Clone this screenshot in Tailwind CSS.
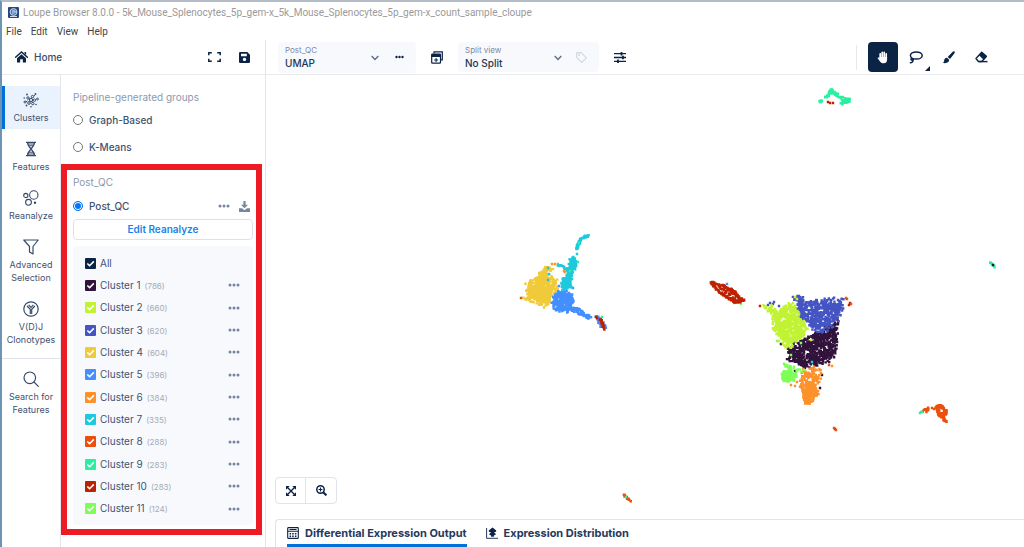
<!DOCTYPE html>
<html lang="en">
<head>
    <meta charset="UTF-8">
    <meta name="viewport" content="width=device-width, initial-scale=1.0">
    <title>Loupe Browser 8.0.0</title>
    <script src="https://cdn.jsdelivr.net/npm/@tailwindcss/browser@4"></script>
</head>
<body class="h-screen flex flex-col overflow-hidden bg-white border-l-2 border-l-[#6d93b5] border-t-2 border-t-[#b3bcc6] font-['Inter',sans-serif] text-[#3f5271] text-[10px]">

    <!-- Window title and menu -->
    <header class="shrink-0 font-['Roboto',sans-serif]">
        <div class="h-[21px] flex items-center gap-1 pl-[6px] text-[10px] text-[#9a9a9a] whitespace-nowrap">
            <svg class="size-[11px]" viewBox="0 0 11 11"><rect width="11" height="11" rx="1" fill="#26477e"/><circle cx="5.5" cy="5" r="3.4" fill="#4b77b5" stroke="#c8d8ee" stroke-width="1"/><path d="M4 4h3M4 6h2M6 5h2M2 9.5h7" stroke="#e4edf8" stroke-width=".9"/></svg>
            <h1>Loupe Browser 8.0.0 - 5k_Mouse_Splenocytes_5p_gem-x_5k_Mouse_Splenocytes_5p_gem-x_count_sample_cloupe</h1>
        </div>
        <nav class="h-[17px] flex items-center gap-[9px] pl-1 text-[10px] text-[#444]">
            <button>File</button>
            <button>Edit</button>
            <button>View</button>
            <button>Help</button>
        </nav>
    </header>

    <div class="flex-1 min-h-0 flex">
        <!-- Left side -->
        <aside class="w-[264px] shrink-0 flex flex-col border-r border-[#e3e6ec]">
            <div class="h-[35px] shrink-0 flex items-center pl-[13px] pr-[15px] border-b border-[#e8eaee] text-[#0b2345]">
                <a href="#" class="flex items-center gap-[6px] font-medium text-[#3a4d6d]">
                    <svg class="w-[13px] h-[12px]" viewBox="0 0 13 12"><path d="M.6 6.2 6.5 1l5.9 5.2" fill="none" stroke="#0b2345" stroke-width="1.5" stroke-linecap="round"/><path d="M9.500 1h1.600v3l-1.600-1.400zM6.500 3.300 11 7.200V11.500H7.800V8.200H5.200v3.300H2V7.200z" fill="#0b2345"/></svg>
                    Home
                </a>
                <button class="ml-auto mr-[18px]" aria-label="Full screen">
                    <svg class="w-[13px] h-[10px]" viewBox="0 0 13 10" fill="none" stroke="#0b2345" stroke-width="1.500"><path d="M.8 3.200V.8h3M9.200.8h3v2.400M12.200 6.800v2.400h-3M3.800 9.200h-3V6.800"/></svg>
                </button>
                <button aria-label="Save">
                    <svg class="size-[11px]" viewBox="0 0 11 11"><path fill="#0b2345" fill-rule="evenodd" d="M1.200 0H8.300L11 2.700V9.800Q11 11 9.800 11H1.200Q0 11 0 9.800V1.200Q0 0 1.200 0zM2 1.700V4.200H7.800V1.700zM5.500 5.700a1.700 1.700 0 1 0 .01 0z"/></svg>
                </button>
            </div>

            <div class="flex-1 min-h-0 flex">
                <nav class="w-[59px] shrink-0 border-r border-[#e3e6ec] pt-[11px] text-[9px] leading-[13px] text-center">
                    <ul class="flex flex-col gap-[6px]">
                        <li>
                            <a href="#" class="flex flex-col items-center gap-[3px] pt-[6px] pb-[5px] pr-[3px] bg-[#e9f2fd] border-l-3 border-[#0071d9]">
                                <svg class="size-4" viewBox="0 0 16 16" fill="none" stroke="#354a6b" stroke-width="1"><circle cx="8" cy="8" r="1.600"/><circle cx="5" cy="6" r="1.200"/><circle cx="9.500" cy="4.600" r="1.200"/><circle cx="11.500" cy="8.200" r="1.200"/><circle cx="6" cy="11" r="1.300"/><circle cx="9.800" cy="11.600" r="1.200"/><circle cx="2" cy="10" r="1"/><circle cx="14.500" cy="7" r=".9"/><path d="M6 6.600l.8.500M8.500 6.400l.5-.800M9.700 8h.7M7.200 9.500l-.6.500M9 9.300l.4 1.200M3 9.800l1.500-1M10.600 4 12 3"/><g fill="#354a6b" stroke="none"><circle cx="4" cy="2.500" r=".9"/><circle cx="12.500" cy="2" r=".9"/><circle cx="13" cy="12.500" r=".8"/><circle cx="3.500" cy="13.500" r=".9"/><circle cx="8" cy="14.800" r=".8"/><circle cx="1.200" cy="6" r=".8"/></g></svg>
                                Clusters
                            </a>
                        </li>
                        <li>
                            <a href="#" class="flex flex-col items-center gap-[3px] pt-[6px] pb-[5px]">
                                <svg class="size-4" viewBox="0 0 16 16" fill="none" stroke="#354a6b" stroke-width="1"><path d="M3 1.300h10M3 14.700h10M4.500 1.500C4.500 5 7 6.500 8 8c1 1.500 3.500 3 3.500 6.500M11.500 1.500C11.500 5 9 6.500 8 8c-1 1.500-3.500 3-3.500 6.500" stroke-width="1.300"/><path d="M5 3h6M5.500 4.800h5M5.500 11.200h5M5 13h6"/></svg>
                                Features
                            </a>
                        </li>
                        <li>
                            <a href="#" class="flex flex-col items-center gap-[3px] pt-[6px] pb-[5px]">
                                <svg class="size-4" viewBox="0 0 16 16" fill="none" stroke="#354a6b" stroke-width="1.100"><circle cx="10.800" cy="5" r="4.200"/><circle cx="2.800" cy="5.500" r="2.100"/><circle cx="5.500" cy="12.300" r="2.900"/><circle cx="12" cy="12.800" r="1.200" fill="#354a6b" stroke="none"/></svg>
                                Reanalyze
                            </a>
                        </li>
                        <li>
                            <a href="#" class="flex flex-col items-center gap-[3px] pt-[6px] pb-[5px]">
                                <svg class="size-4" viewBox="0 0 16 16" fill="none" stroke="#354a6b" stroke-width="1.200" stroke-linejoin="round"><path d="M.8 1h14.400L10 7.500V15l-3.500-2V7.500z"/></svg>
                                Advanced<br>Selection
                            </a>
                        </li>
                        <li>
                            <a href="#" class="flex flex-col items-center gap-[3px] pt-[6px] pb-[5px]">
                                <svg class="size-4" viewBox="0 0 16 16" fill="none" stroke="#354a6b"><circle cx="8" cy="8" r="7.200" stroke-width="1.200"/><path d="M4 5l3.300 3.300V13M12 5 8.700 8.300V13M5.600 3.800 8 6.300l2.400-2.500" stroke-width="1.200"/></svg>
                                V(D)J<br>Clonotypes
                            </a>
                        </li>
                    </ul>
                    <a href="#" class="mt-[7px] border-t border-[#dfe3e9] flex flex-col items-center gap-[3px] pt-[12px]">
                        <svg class="size-4" viewBox="0 0 16 16" fill="none" stroke="#354a6b" stroke-width="1.200" stroke-linecap="round"><circle cx="6.800" cy="6.800" r="5.800"/><path d="M11 11l4.300 4.300"/></svg>
                        Search for<br>Features
                    </a>
                </nav>

                <div class="flex-1 min-w-0 pt-[14px]">
                    <fieldset class="pl-3 pb-[9px]">
                        <legend class="h-4 leading-4 text-[#8b99af]">Pipeline-generated groups</legend>
                        <label class="mt-[7px] flex items-center gap-[6px] h-4 font-medium">
                            <input type="radio" name="group" class="appearance-none size-[10px] rounded-full border border-[#767676] bg-white">
                            Graph-Based
                        </label>
                        <label class="mt-[11px] flex items-center gap-[6px] h-4 font-medium">
                            <input type="radio" name="group" class="appearance-none size-[10px] rounded-full border border-[#767676] bg-white">
                            K-Means
                        </label>
                    </fieldset>

                    <section class="mr-[3px] border-6 border-[#ed1c24] pl-[6px] pr-[3px] pt-[4px] pb-[4px]">
                        <h2 class="h-4 leading-4 text-[#8b99af]">Post_QC</h2>
                        <div class="mt-2 h-4 flex items-center">
                            <label class="flex items-center gap-[6px] font-medium">
                                <input type="radio" name="group" checked class="appearance-none size-[10px] rounded-full border border-[#0075ff] bg-[#0075ff] ring-1 ring-inset ring-white">
                                Post_QC
                            </label>
                            <button class="ml-auto mr-[9px]" aria-label="More options for Post_QC">
                                <svg class="w-[12px] h-[4px]" viewBox="0 0 12 4" fill="#7686a0"><circle cx="2" cy="2" r="1.500"/><circle cx="6" cy="2" r="1.500"/><circle cx="10" cy="2" r="1.500"/></svg>
                            </button>
                            <button class="mr-[3px]" aria-label="Download">
                                <svg class="size-[11px]" viewBox="0 0 11 11" fill="#7686a0"><path d="M4.400 0h2.200v3.800H9L5.500 7.300 2 3.800h2.400z"/><path d="M0 7.200h3l2.500 2 2.500-2h3V11H0z"/></svg>
                            </button>
                        </div>
                        <button class="mt-[5px] w-full h-[21px] rounded border border-[#dde2ea] font-semibold text-[#1b82e8]">Edit Reanalyze</button>
                        <ul id="clusters" class="mt-[6px] h-[279px] rounded bg-[#f7f9fd] pl-3 pr-[13px] pt-[6px] pb-[5px] flex flex-col"></ul>
                    </section>
                </div>
            </div>
        </aside>

        <!-- Plot side -->
        <main class="flex-1 min-w-0 flex flex-col">
            <div class="h-[35px] shrink-0 flex items-center pl-3 pr-[36px] border-b border-[#e8eaee] text-[#0b2345]">
                <div class="w-[138px] h-[31px] rounded bg-[#f7f9fd] flex items-center pl-[7px] pr-3">
                    <div class="flex-1 flex flex-col relative">
                        <label for="projection" class="text-[8px] leading-[11px] text-[#7e8ca3]">Post_QC</label>
                        <select id="projection" class="appearance-none w-full h-[14px] font-medium text-[10px] text-[#26364f]">
                            <option>UMAP</option>
                        </select>
                        <svg class="absolute right-0 top-[10px] w-2 h-[6px] pointer-events-none" viewBox="0 0 8 6" fill="none" stroke="#5b6d8a" stroke-width="1.400"><path d="M.7 1 4 4.400 7.300 1"/></svg>
                    </div>
                    <button class="ml-[16px]" aria-label="Projection options">
                        <svg class="w-[9px] h-[4px]" viewBox="0 0 9 4" fill="#0b2345"><circle cx="1.500" cy="2" r="1.200"/><circle cx="4.500" cy="2" r="1.200"/><circle cx="7.500" cy="2" r="1.200"/></svg>
                    </button>
                </div>
                <button class="mx-[15px]" aria-label="New window">
                    <svg class="w-[12px] h-[13px]" viewBox="0 0 12 13" fill="none" stroke="#0b2345" stroke-width="1.200"><path d="M3 2.500V.8h8.300v8H9.800"/><rect x=".7" y="3" width="8.800" height="9.200" rx=".8"/><path d="M.7 4.500h8.800" stroke-width="3"/><path d="M5.100 7v4M3.100 9h4" stroke-width="1"/></svg>
                </button>
                <div class="w-[141px] h-[30px] rounded bg-[#f7f9fd] flex items-center pl-[7px] pr-3">
                    <div class="flex-1 flex flex-col relative">
                        <label for="split" class="text-[8px] leading-[11px] text-[#7e8ca3]">Split view</label>
                        <select id="split" class="appearance-none w-full h-[14px] font-medium text-[10px] text-[#26364f]">
                            <option>No Split</option>
                        </select>
                        <svg class="absolute right-0 top-[10px] w-2 h-[6px] pointer-events-none" viewBox="0 0 8 6" fill="none" stroke="#5b6d8a" stroke-width="1.400"><path d="M.7 1 4 4.400 7.300 1"/></svg>
                    </div>
                    <button class="ml-[14px]" aria-label="Labels" disabled>
                        <svg class="size-[11px]" viewBox="0 0 11 11" fill="none" stroke="#d3d8e0" stroke-width="1.100" stroke-linejoin="round"><path d="M.6.9 5.200.6l5.200 5.200-4.600 4.600L.6 5.400z"/><circle cx="3" cy="3" r=".5"/></svg>
                    </button>
                </div>
                <button class="ml-[15px]" aria-label="Settings">
                    <svg class="w-[12px] h-[11px]" viewBox="0 0 12 11" stroke="#0b2345" stroke-width="1.300"><path d="M0 1.700h12M0 5.500h12M0 9.300h12"/><path d="M7.500 0v3.400M9 3.800v3.400M4 7.600V11" stroke-width="1.800"/></svg>
                </button>

                <div class="ml-auto flex items-center border-l border-[#e6e8ec] pl-[11px] h-[25px]">
                    <button class="size-[30px] rounded bg-[#0b2345] flex items-center justify-center" aria-label="Pan">
                        <svg class="w-[12px] h-[13px]" viewBox="0 0 12 13"><path d="M3.200 7V2.800M5.200 6.500V1.400M7.200 6.500V1.400M9.200 7V2.800" stroke="#fff" stroke-width="1.700" stroke-linecap="round"/><path fill="#fff" d="M2.400 6h7.700v2.300c0 2.500-1 3.900-3.300 4H5.700C4.200 12.200 3.200 10.800 2.300 9.500L.8 7.400c-.4-.7.500-1.200 1-.6l.8.8z"/></svg>
                    </button>
                    <button class="relative ml-[11px]" aria-label="Lasso">
                        <svg class="w-[14px] h-[13px]" viewBox="0 0 14 13" fill="none" stroke="#0b2345" stroke-width="1.500" stroke-linecap="round"><ellipse cx="7.300" cy="4.500" rx="5.900" ry="3.600"/><path d="M2.700 7.100c-1.300 1-.7 2.300.7 2.200 1.200-.1 1.300-1.200.2-1.500M4 9.200c.1 1.500-1 2.500-2.600 2.600"/></svg>
                        <svg class="absolute left-[16px] top-[15px] size-[5px]" viewBox="0 0 5 5" fill="#0b2345"><path d="M5 0v5H0z"/></svg>
                    </button>
                    <button class="ml-[19px]" aria-label="Brush">
                        <svg class="size-[13px]" viewBox="0 0 13 13" fill="#0b2345"><path d="M12.500.5c.6.600.3 1.300-.2 2L8 8 5.700 6 10.500.9c.7-.7 1.400-1 2-.4zM5 6.700 7.200 8.800C7 11.500 4.500 12.800.5 11.800c1.600-.5 1.500-1.300 1.700-2.600C2.400 7.600 3.500 6.600 5 6.700z"/></svg>
                    </button>
                    <button class="ml-[20px]" aria-label="Eraser">
                        <svg class="w-[13px] h-[12px]" viewBox="0 0 13 12"><path d="M1 7.500 6.700 1.300l4.700 4.100L6.800 10.500H3.400z" fill="none" stroke="#0b2345" stroke-width="1.400" stroke-linejoin="round"/><path d="M4 4.300 7 1l4.900 4.400-3.100 3.500z" fill="#0b2345"/><path d="M4 10.600h8.500" stroke="#0b2345" stroke-width="1.400"/></svg>
                    </button>
                </div>
            </div>

            <div class="relative flex-1 min-h-0">
                <svg id="plot" class="w-full h-full" viewBox="266 75 758 444" preserveAspectRatio="xMidYMid meet" role="img" aria-label="UMAP projection"></svg>
                <div class="absolute left-[9px] bottom-[15px] h-[27px] flex rounded border border-[#dfe3ea] bg-white">
                    <button class="w-[30px] flex items-center justify-center border-r border-[#dfe3ea]" aria-label="Fit to view">
                        <svg class="size-[10px]" viewBox="0 0 10 10" fill="#0b2345"><path d="M0 0h3.700L0 3.700zM10 0v3.700L6.300 0zM0 10V6.300L3.700 10zM10 10H6.300L10 6.300z"/><path d="M1.500 1.500l7 7M8.500 1.500l-7 7" stroke="#0b2345" stroke-width="1.400"/></svg>
                    </button>
                    <button class="w-[30px] flex items-center justify-center" aria-label="Zoom in">
                        <svg class="size-[11px]" viewBox="0 0 11 11" fill="none" stroke="#0b2345" stroke-width="1.500"><circle cx="4.500" cy="4.500" r="3.700"/><path d="M7.200 7.200l3.200 3.200" stroke-width="2"/><path d="M2.600 4.500h3.800M4.500 2.600v3.800" stroke-width="1.100"/></svg>
                    </button>
                </div>
            </div>

            <div class="shrink-0 ml-[9px] h-[28px] border-t border-l border-[#dfe3ea] rounded-tl flex gap-[19px] pl-[11px] text-[11px] text-[#26395a] font-bold">
                <button class="flex items-center gap-[6px] border-b-3 border-[#0071d9] pt-[2px]">
                    <svg class="w-[12px] h-[12px]" viewBox="0 0 12 12" fill="none" stroke="#0b2345" stroke-width="1.100"><rect x=".7" y=".6" width="10.600" height="10.800" rx=".6"/><path d="M.7 4.300h10.600M2.500 2.500h7"/><path d="M2.600 6.800h1.500M5.200 6.800h1.500M7.900 6.800h1.500M2.600 9.200h1.500M5.200 9.200h1.500M7.900 9.200h1.500" stroke-width="1.400"/></svg>
                    Differential Expression Output
                </button>
                <button class="flex items-center gap-[6px] border-b-3 border-transparent pt-[2px]">
                    <svg class="w-[12px] h-[12px]" viewBox="0 0 12 12"><path d="M.6 1v10.300H12" fill="none" stroke="#26395a" stroke-width="1"/><path d="M6.500.5 10 3.300c.8.900.2 1.800-1.900 2 0 1 1.700 1.100 1.700 2 0 .8-1.500.9-1.900 1.200v1.200H5.100V8.500C4.700 8.200 3.200 8.100 3.200 7.300c0-.9 1.700-1 1.700-2-2.100-.2-2.700-1.100-1.900-2z" fill="#0b2345"/></svg>
                    Expression Distribution
                </button>
            </div>
        </main>
    </div>

    <script>
        const clusters = [
            { name: 'All', color: '#0b2345' },
            { name: 'Cluster 1', count: 786, color: '#30123b' },
            { name: 'Cluster 2', count: 660, color: '#c1f334' },
            { name: 'Cluster 3', count: 620, color: '#4454c3' },
            { name: 'Cluster 4', count: 604, color: '#f1ca3a' },
            { name: 'Cluster 5', count: 396, color: '#448fff' },
            { name: 'Cluster 6', count: 384, color: '#fe922a' },
            { name: 'Cluster 7', count: 335, color: '#1fc9dd' },
            { name: 'Cluster 8', count: 288, color: '#ea4f0d' },
            { name: 'Cluster 9', count: 283, color: '#2aefa1' },
            { name: 'Cluster 10', count: 283, color: '#be2102' },
            { name: 'Cluster 11', count: 124, color: '#7dff56' }
        ];

        document.getElementById('clusters').innerHTML = clusters.map(c => `
            <li class="flex-1 flex items-center">
                <label class="flex items-center gap-1">
                    <span class="grid">
                        <input type="checkbox" checked class="peer appearance-none col-start-1 row-start-1 size-[11px] rounded-[1px]" style="background-color: ${c.color}">
                        <svg class="col-start-1 row-start-1 size-[11px] pointer-events-none" viewBox="0 0 11 11" fill="none" stroke="#fff" stroke-width="1.600"><path d="M2.300 5.500 4.600 7.700 8.800 3.400"/></svg>
                    </span>
                    <span>${c.name}</span>
                    ${c.count ? `<span class="text-[8px] text-[#a5abb5] pt-[1px]">(${c.count})</span>` : ''}
                </label>
                ${c.count ? `<button class="ml-auto" aria-label="Options for ${c.name}">
                    <svg class="w-[12px] h-[4px]" viewBox="0 0 12 4" fill="#7686a0"><circle cx="2" cy="2" r="1.500"/><circle cx="6" cy="2" r="1.500"/><circle cx="10" cy="2" r="1.500"/></svg>
                </button>` : ''}
            </li>`).join('');

        // Small seeded generator so the projection is the same on every load
        let seed = 42;
        function rand() {
            seed = (seed * 1664525 + 1013904223) % 4294967296;
            return seed / 4294967296;
        }

        function inside(x, y, poly) {
            let hit = false;
            for (let i = 0, j = poly.length - 1; i < poly.length; j = i++) {
                const [xi, yi] = poly[i];
                const [xj, yj] = poly[j];
                if ((yi > y) !== (yj > y) && x < (xj - xi) * (y - yi) / (yj - yi) + xi) hit = !hit;
            }
            return hit;
        }

        // n cells spread over a polygon, with a soft edge
        function area(n, poly, soft = 2) {
            const xs = poly.map(p => p[0]);
            const ys = poly.map(p => p[1]);
            const x0 = Math.min(...xs), x1 = Math.max(...xs);
            const y0 = Math.min(...ys), y1 = Math.max(...ys);
            const out = [];
            while (out.length < n) {
                const x = x0 + rand() * (x1 - x0);
                const y = y0 + rand() * (y1 - y0);
                if (inside(x, y, poly)) out.push([x + (rand() - 0.5) * soft * 2, y + (rand() - 0.5) * soft * 2]);
            }
            return out;
        }

        // n cells along a line
        function trail(n, line, spread = 1) {
            const out = [];
            for (let i = 0; i < n; i++) {
                const t = (i + rand()) / n * (line.length - 1);
                const k = Math.min(Math.floor(t), line.length - 2);
                const f = t - k;
                out.push([
                    line[k][0] + (line[k + 1][0] - line[k][0]) * f + (rand() - 0.5) * spread * 2,
                    line[k][1] + (line[k + 1][1] - line[k][1]) * f + (rand() - 0.5) * spread * 2
                ]);
            }
            return out;
        }

        const cells = [
            [1, area(620, [[788,348],[800,340],[812,335],[825,332],[836,326],[836,350],[832,360],[820,364],[805,368],[796,364],[788,357]])],
            [1, area(40, [[808,335],[822,330],[837,320],[837,330]])],
            [1, [[781,344],[822,375],[820,388],[795,371],[805,373],[838,323],[837,318]]],
            [3, area(430, [[798,299],[812,302],[824,300],[829,305],[840,305],[840,316],[830,324],[815,331],[806,322],[798,314]])],
            [3, area(65, [[823,299],[844,299],[843,307],[838,314],[826,307]])],
            [3, trail(18, [[792,298],[797,297],[802,299]], 2)],
            [3, trail(25, [[815,331],[826,329],[837,320]], 3)],
            [3, [[770,303],[774,302],[779,306],[776,312],[768,305],[773,304]]],
            [2, area(540, [[773,314],[785,307],[793,302],[797,310],[803,322],[807,330],[800,338],[790,344],[780,337],[774,328]])],
            [2, area(30, [[764,306],[773,307],[778,312],[772,314],[766,310]])],
            [2, trail(24, [[785,340],[786,347],[792,345]], 3)],
            [2, [[795,297],[797,299],[811,340],[779,341]]],
            [6, area(115, [[801,378],[804,370],[813,367],[820,368],[820,380],[815,387],[800,386]])],
            [6, area(190, [[801,386],[815,384],[818,394],[812,402],[805,405],[803,395]], 1)],
            [6, [[791,385],[797,382],[832,366],[795,386],[552,264],[555,264],[558,264],[564,271],[565,272]]],
            [11, area(75, [[781,375],[784,371],[796,374],[796,379],[789,383],[783,380]], 1)],
            [11, area(22, [[784,363],[800,368],[802,374],[787,374]], 1)],
            [11, [[777,341],[791,355],[734,303],[741,304],[785,365],[801,343],[804,370]]],
            [10, trail(120, [[711,282],[717,284],[724,286],[733,290],[739,297],[744,300],[739,302],[733,302],[727,297],[721,293],[716,289],[711,283]], 0.7)],
            [10, area(55, [[717,284],[733,289],[739,297],[742,301],[733,302],[722,292]], 0.7)],
            [4, area(480, [[527,297],[527,285],[534,279],[541,273],[554,279],[557,282],[556,289],[550,298],[548,306],[540,302]])],
            [4, area(50, [[536,277],[544,269],[553,266],[550,273],[541,280]])],
            [4, trail(16, [[523,298],[532,301],[545,307]], 1)],
            [5, area(270, [[557,291],[571,292],[574,301],[572,306],[567,312],[553,309],[553,299]], 1.7)],
            [5, area(70, [[568,308],[578,308],[586,314],[593,319],[585,317],[573,311]], 1)],
            [5, trail(45, [[597,317],[600,322],[604,327]], 2)],
            [5, [[559,286],[576,266],[566,281],[727,284],[573,288]]],
            [7, area(210, [[574,258],[576,260],[575,266],[570,283],[571,289],[564,289],[561,283],[566,276],[569,263]])],
            [7, trail(65, [[577,249],[578,245],[580,240],[584,237],[588,236]], 1)],
            [7, trail(12, [[558,266],[562,266],[566,269]], 1)],
            [7, [[548,268],[549,274],[548,280],[577,254],[812,362]]],
            [10, trail(20, [[600,319],[602,324],[605,329]], 1)],
            [10, [[596,317],[597,318],[760,306],[850,303],[849,305],[835,429],[828,102],[830,103],[833,103]]],
            [8, [[521,298],[847,299],[851,304],[846,298],[829,365],[836,430],[834,428]]],
            [9, trail(80, [[825,99],[828,95],[832,91],[836,94],[841,97],[845,100],[849,100],[847,103],[841,104]], 1.5)],
            [9, trail(10, [[830,90],[833,91]], 1)],
            [9, trail(10, [[820,102],[822,101]], 1)],
            [9, trail(12, [[990,262],[995,267]], 0.4)],
            [1, [[993,265]]],
            [8, trail(75, [[936,407],[939,406],[943,408],[946,412],[944,415],[939,414],[937,409]], 1.3)],
            [8, trail(30, [[939,414],[943,417],[946,422]], 1.3)],
            [8, trail(14, [[923,411],[928,408],[927,412]], 1)],
            [8, [[932,408],[934,409]]],
            [9, [[921,412],[920,413],[922,412]]],
            [8, trail(14, [[624,495],[627,498],[631,501]], 0.8)],
            [9, [[626,497],[579,243],[578,262],[570,271],[602,317]]]
        ];

        // Each cell is a square of 2.4 units
        document.getElementById('plot').innerHTML = cells.map(([id, pts]) =>
            `<path fill="${clusters[id].color}" d="${pts.map(([x, y]) => `M${(x - 1.2).toFixed(1)} ${(y - 1.2).toFixed(1)}h2.4v2.4h-2.4z`).join('')}"/>`
        ).join('');
    </script>
</body>
</html>
